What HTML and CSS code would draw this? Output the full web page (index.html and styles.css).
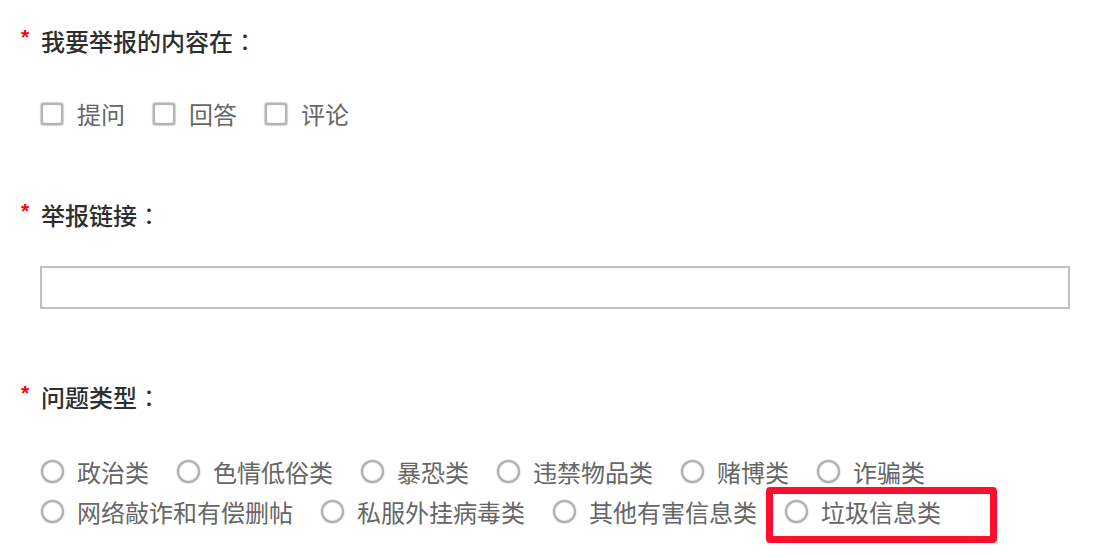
FILE: index.html
```html
<!DOCTYPE html>
<html lang="zh-CN">
<head>
<meta charset="utf-8">
<title>举报</title>
<link rel="stylesheet" href="styles.css">
</head>
<body>
<form class="report-form">
  <div class="field field-content">
    <div class="field-label"><span class="req">*</span><span class="label-text">我要举报的内容在<span class="colon" lang="zh-TW">：</span></span></div>
    <div class="options">
      <label class="option"><input type="checkbox" class="check"><span>提问</span></label>
      <label class="option"><input type="checkbox" class="check"><span>回答</span></label>
      <label class="option"><input type="checkbox" class="check"><span>评论</span></label>
    </div>
  </div>

  <div class="field field-link">
    <div class="field-label"><span class="req">*</span><span class="label-text">举报链接<span class="colon" lang="zh-TW">：</span></span></div>
    <input type="text" class="text-input">
  </div>

  <div class="field field-type">
    <div class="field-label"><span class="req">*</span><span class="label-text">问题类型<span class="colon" lang="zh-TW">：</span></span></div>
    <div class="options options-radio">
      <label class="option"><input type="radio" name="type" class="radio"><span>政治类</span></label>
      <label class="option"><input type="radio" name="type" class="radio"><span>色情低俗类</span></label>
      <label class="option"><input type="radio" name="type" class="radio"><span>暴恐类</span></label>
      <label class="option"><input type="radio" name="type" class="radio"><span>违禁物品类</span></label>
      <label class="option"><input type="radio" name="type" class="radio"><span>赌博类</span></label>
      <label class="option"><input type="radio" name="type" class="radio"><span>诈骗类</span></label>
      <label class="option"><input type="radio" name="type" class="radio"><span>网络敲诈和有偿删帖</span></label>
      <label class="option"><input type="radio" name="type" class="radio"><span>私服外挂病毒类</span></label>
      <label class="option"><input type="radio" name="type" class="radio"><span>其他有害信息类</span></label>
      <label class="option option-flagged"><input type="radio" name="type" class="radio"><span>垃圾信息类</span></label>
    </div>
  </div>
</form>
</body>
</html>
```

FILE: styles.css
```css
html, body {
  margin: 0;
  padding: 0;
  background: #ffffff;
}

body {
  font-family: "Noto Sans CJK SC", "Noto Sans", sans-serif;
  font-size: 24px;
  color: #333333;
  min-height: 558px;
}

.report-form {
  padding: 25px 24px 24px 20px;
}

.field-label {
  display: flex;
  align-items: flex-start;
  height: 32px;
  line-height: 32px;
  color: #2e2e2e;
}

.req {
  width: 20px;
  flex: none;
  font-family: "Liberation Sans", sans-serif;
  font-size: 21px;
  font-weight: bold;
  line-height: 21px;
  margin-top: 1px;
  padding-left: 1px;
  color: #ff0000;
}

.label-text {
  white-space: nowrap;
  font-weight: 500;
}

.colon {
  font-family: "Noto Sans CJK TC", "Noto Sans CJK SC", sans-serif;
  font-weight: 400;
}

.options {
  display: flex;
  flex-wrap: wrap;
  column-gap: 27px;
  row-gap: 0;
  padding-left: 20px;
  color: #666666;
}

.field-content .options {
  margin-top: 41px;
}

.option {
  display: inline-flex;
  align-items: center;
  height: 32px;
  line-height: 32px;
  white-space: nowrap;
}

.options-radio {
  margin-top: 39px;
}

.options-radio .option {
  height: 40px;
  line-height: 40px;
}

.check,
.radio {
  -webkit-appearance: none;
  appearance: none;
  box-sizing: border-box;
  margin: 0 13px 0 1px;
  flex: none;
  background: #ffffff;
}

.check {
  width: 22px;
  height: 22px;
  border: 2px solid #b4b4b4;
  border-radius: 3px;
  box-shadow: 0 0 1px 0.5px rgba(0, 0, 0, 0.18), inset 0 0 1px rgba(0, 0, 0, 0.25);
  margin-right: 14px;
}

.radio {
  width: 23px;
  height: 23px;
  border: 2px solid #b0b0b0;
  border-radius: 50%;
  box-shadow: 0 0 1px 0.5px rgba(0, 0, 0, 0.18), inset 0 0 1.5px rgba(0, 0, 0, 0.3);
  position: relative;
  top: -1px;
}

.field-link {
  margin-top: 69px;
}

.text-input {
  display: block;
  box-sizing: border-box;
  width: 1030px;
  height: 43px;
  margin: 35px 0 0 20px;
  border: 2px solid #c0c0c0;
  border-radius: 0;
  background: #ffffff;
  padding: 0 8px;
  font: inherit;
  outline: none;
}

.field-type {
  margin-top: 72px;
}

.option-flagged {
  position: relative;
}

.option-flagged::after {
  content: "";
  position: absolute;
  left: -18px;
  right: -56px;
  top: -5px;
  bottom: -11px;
  border: 7px solid #fe0f2d;
  border-radius: 4px;
  pointer-events: none;
}
```
